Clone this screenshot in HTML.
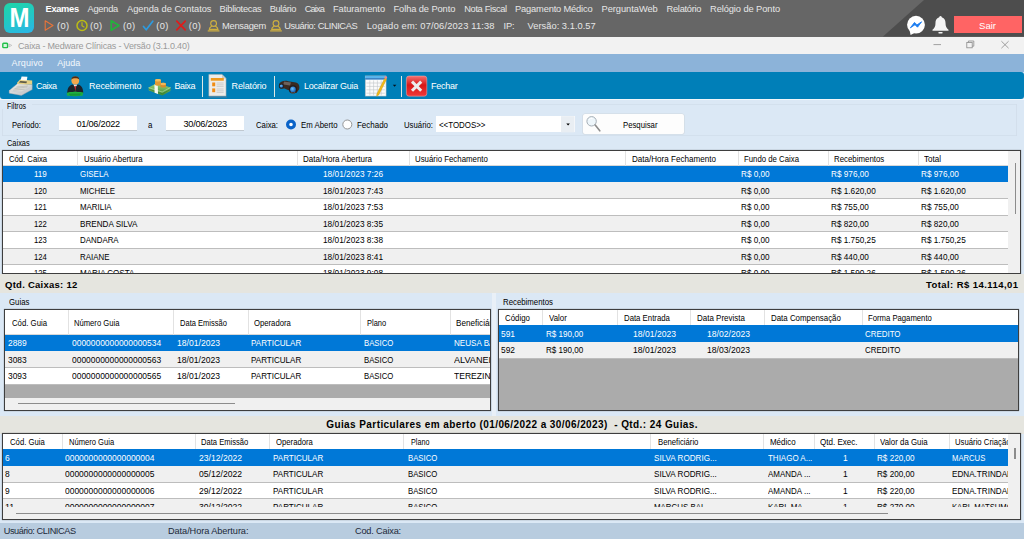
<!DOCTYPE html>
<html><head><meta charset="utf-8"><title>Caixa</title>
<style>
html,body{margin:0;padding:0;}
body{width:1024px;height:539px;overflow:hidden;position:relative;background:#dbe8f5;font-family:"Liberation Sans",sans-serif;}
.t{position:absolute;white-space:pre;font-family:"Liberation Sans",sans-serif;}
.r{position:absolute;}
svg{position:absolute;overflow:visible;}
</style></head><body>
<div class="r" style="left:0px;top:0px;width:1024px;height:36.5px;background:#666666;"></div>
<svg style="left:0;top:0" width="1024" height="37"><polygon points="924,0 1024,0 1024,36.5 883,36.5" fill="#4d4d4d"/></svg>
<div class="r" style="left:3.75px;top:3px;width:30px;height:29.5px;background:linear-gradient(160deg,#1fd6a8 0%,#22c8c4 50%,#2bb4ea 100%);border-radius:6px;"></div>
<div class="t " style="top:4.00px;font-size:24px;line-height:28.80px;color:#fff;font-weight:bold;left:9.50px;transform:scaleY(1.12);transform-origin:50% 50%;">M</div>
<div class="t " style="top:3.52px;font-size:9.3px;line-height:11.16px;color:#ffffff;font-weight:bold;letter-spacing:-0.318px;left:45.50px;">Exames</div>
<div class="t " style="top:3.52px;font-size:9.3px;line-height:11.16px;color:#e6e6e6;letter-spacing:-0.260px;left:87.50px;">Agenda</div>
<div class="t " style="top:3.52px;font-size:9.3px;line-height:11.16px;color:#e6e6e6;letter-spacing:-0.016px;left:127.00px;">Agenda de Contatos</div>
<div class="t " style="top:3.52px;font-size:9.3px;line-height:11.16px;color:#e6e6e6;letter-spacing:-0.270px;left:219.50px;">Bibliotecas</div>
<div class="t " style="top:3.52px;font-size:9.3px;line-height:11.16px;color:#e6e6e6;letter-spacing:-0.385px;left:269.75px;">Bulário</div>
<div class="t " style="top:3.52px;font-size:9.3px;line-height:11.16px;color:#e6e6e6;letter-spacing:-0.905px;left:304.75px;">Caixa</div>
<div class="t " style="top:3.52px;font-size:9.3px;line-height:11.16px;color:#e6e6e6;letter-spacing:-0.066px;left:333.00px;">Faturamento</div>
<div class="t " style="top:3.52px;font-size:9.3px;line-height:11.16px;color:#e6e6e6;letter-spacing:-0.095px;left:393.50px;">Folha de Ponto</div>
<div class="t " style="top:3.52px;font-size:9.3px;line-height:11.16px;color:#e6e6e6;letter-spacing:-0.365px;left:464.25px;">Nota Fiscal</div>
<div class="t " style="top:3.52px;font-size:9.3px;line-height:11.16px;color:#e6e6e6;letter-spacing:-0.164px;left:515.00px;">Pagamento Médico</div>
<div class="t " style="top:3.52px;font-size:9.3px;line-height:11.16px;color:#e6e6e6;letter-spacing:-0.040px;left:601.50px;">PerguntaWeb</div>
<div class="t " style="top:3.52px;font-size:9.3px;line-height:11.16px;color:#e6e6e6;letter-spacing:-0.274px;left:666.50px;">Relatório</div>
<div class="t " style="top:3.52px;font-size:9.3px;line-height:11.16px;color:#e6e6e6;letter-spacing:-0.084px;left:710.00px;">Relógio de Ponto</div>
<div class="t " style="top:20.52px;font-size:9.3px;line-height:11.16px;color:#e6e6e6;letter-spacing:0.378px;left:57.00px;">(0)</div>
<div class="t " style="top:20.52px;font-size:9.3px;line-height:11.16px;color:#e6e6e6;letter-spacing:0.378px;left:90.00px;">(0)</div>
<div class="t " style="top:20.52px;font-size:9.3px;line-height:11.16px;color:#e6e6e6;letter-spacing:0.378px;left:123.00px;">(0)</div>
<div class="t " style="top:20.52px;font-size:9.3px;line-height:11.16px;color:#e6e6e6;letter-spacing:0.378px;left:156.25px;">(0)</div>
<div class="t " style="top:20.52px;font-size:9.3px;line-height:11.16px;color:#e6e6e6;letter-spacing:0.378px;left:188.75px;">(0)</div>
<div class="t " style="top:20.52px;font-size:9.3px;line-height:11.16px;color:#e6e6e6;letter-spacing:-0.250px;left:222.00px;">Mensagem</div>
<div class="t " style="top:20.52px;font-size:9.3px;line-height:11.16px;color:#e6e6e6;letter-spacing:-0.418px;left:284.25px;">Usuário: CLINICAS</div>
<div class="t " style="top:20.52px;font-size:9.3px;line-height:11.16px;color:#e6e6e6;letter-spacing:0.170px;left:366.75px;">Logado em: 07/06/2023 11:38</div>
<div class="t " style="top:20.52px;font-size:9.3px;line-height:11.16px;color:#e6e6e6;letter-spacing:-0.124px;left:503.50px;">IP:</div>
<div class="t " style="top:20.52px;font-size:9.3px;line-height:11.16px;color:#e6e6e6;letter-spacing:0.033px;left:527.50px;">Versão: 3.1.0.57</div>
<svg style="left:0;top:0" width="1024" height="37" fill="none" stroke-linecap="round" stroke-linejoin="round">
<path d="M45.2 20.8 L53 25.5 L45.2 30.3 Z" stroke="#e8743a" stroke-width="1.1"/>
<circle cx="82" cy="25.5" r="5" stroke="#bcbc14" stroke-width="1.5"/><path d="M82 22.5 V25.8 L84 27" stroke="#bcbc14" stroke-width="1.2"/>
<path d="M111.2 20.8 L119 25.5 L111.2 30.3 Z" stroke="#22b43c" stroke-width="1.6"/>
<path d="M143.5 26.5 L146.2 29.8 L152.8 21.2" stroke="#2d9be0" stroke-width="1.7"/>
<path d="M176.8 21.2 L185.2 29.8 M185.2 21.2 L176.8 29.8" stroke="#e01b1b" stroke-width="1.7"/>
<g stroke="#cfb040" stroke-width="1.1"><circle cx="213.6" cy="23.5" r="2.9"/><path d="M211.6 26.2 C210.2 27 209.4 28 209.2 29.4 H218 C217.8 28 217 27 215.6 26.2 M208.2 30.9 H219"/></g>
<g stroke="#cfb040" stroke-width="1.1"><circle cx="276" cy="23.5" r="2.9"/><path d="M274 26.2 C272.6 27 271.8 28 271.6 29.4 H280.4 C280.2 28 279.4 27 278 26.2 M270.6 30.9 H281.4"/></g>
</svg>
<svg style="left:0;top:0" width="1024" height="37">
<circle cx="916" cy="24.7" r="8.9" fill="#fff"/><path d="M909.6 30.2 L910.6 35 L915.4 32.6 Z" fill="#fff"/>
<path d="M910.4 27.8 L914.5 22.4 L917 24.9 L921.6 21.8 L917.5 27.2 L915 24.7 Z" fill="#1a7cf0" stroke="#1a7cf0" stroke-width="0.9" stroke-linejoin="round"/>
<path d="M940.5 17.2 c-3.4 0 -5 2.6 -5 5.6 c0 3.6 -1 5.4 -3 7 v0.9 h16 v-0.9 c-2 -1.6 -3 -3.4 -3 -7 c0 -3 -1.6 -5.6 -5 -5.6z" fill="#f4f4f4"/>
<rect x="938.3" y="32" width="4.4" height="1.6" rx="0.8" fill="#f4f4f4"/><circle cx="940.5" cy="17.3" r="1.2" fill="#f4f4f4"/>
</svg>
<div class="r" style="left:954px;top:16px;width:67.8px;height:16.6px;background:#ff6464;"></div>
<div class="t " style="top:19.54px;font-size:9.6px;line-height:11.52px;color:#fff;letter-spacing:-0.018px;left:979.00px;">Sair</div>
<div class="r" style="left:0px;top:36.5px;width:1024px;height:17.5px;background:#f2f2f2;"></div>
<svg style="left:0;top:0" width="1024" height="60">
<rect x="2.1" y="42.6" width="6.2" height="5.6" rx="1.5" fill="#22c04a"/><rect x="3.5" y="43.9" width="3.4" height="3" rx="0.5" fill="#d8f6df"/>
<path d="M9.2 44 L11.8 45.4 L9.2 46.8 Z" fill="none" stroke="#b8b8b8" stroke-width="0.7"/>
<path d="M933.5 44.6 H941" stroke="#8a8a8a" stroke-width="0.8"/>
<rect x="966.8" y="42.4" width="5.4" height="5.4" fill="none" stroke="#8a8a8a" stroke-width="0.8"/><path d="M968.4 42.4 V41 H973.8 V46.2 H972.2" fill="none" stroke="#8a8a8a" stroke-width="0.8"/>
<path d="M1001.4 41.2 L1008.6 48.2 M1008.6 41.2 L1001.4 48.2" stroke="#8a8a8a" stroke-width="0.8"/>
</svg>
<div class="t " style="top:40.70px;font-size:9px;line-height:10.80px;color:#9a9a9a;letter-spacing:-0.183px;left:18.00px;">Caixa - Medware Clínicas - Versão (3.1.0.40)</div>
<div class="r" style="left:0px;top:54px;width:1024px;height:18px;background:#8cb3d9;"></div>
<div class="t " style="top:58.30px;font-size:9px;line-height:10.80px;color:#f4f8fc;letter-spacing:0.127px;left:11.60px;">Arquivo</div>
<div class="t " style="top:58.30px;font-size:9px;line-height:10.80px;color:#f4f8fc;letter-spacing:-0.003px;left:57.20px;">Ajuda</div>
<div class="r" style="left:0px;top:99px;width:1024px;height:1.6px;background:#f2f6fa;"></div>
<div class="r" style="left:0px;top:72px;width:1024px;height:27.4px;background:#007fb8;border-radius:0 3px 3px 3px;"></div>
<div class="t " style="top:80.90px;font-size:9px;line-height:10.80px;color:#ffffff;letter-spacing:-0.502px;left:36.00px;">Caixa</div>
<div class="t " style="top:80.90px;font-size:9px;line-height:10.80px;color:#ffffff;letter-spacing:-0.048px;left:89.00px;">Recebimento</div>
<div class="t " style="top:80.90px;font-size:9px;line-height:10.80px;color:#ffffff;letter-spacing:-0.403px;left:174.50px;">Baixa</div>
<div class="t " style="top:80.90px;font-size:9px;line-height:10.80px;color:#ffffff;letter-spacing:-0.113px;left:231.50px;">Relatório</div>
<div class="t " style="top:80.90px;font-size:9px;line-height:10.80px;color:#ffffff;letter-spacing:-0.252px;left:304.00px;">Localizar Guia</div>
<div class="t " style="top:80.90px;font-size:9px;line-height:10.80px;color:#ffffff;letter-spacing:-0.251px;left:431.00px;">Fechar</div>
<div class="r" style="left:202.05px;top:76px;width:0.9px;height:21px;background:#dfe9e4;"></div>
<div class="r" style="left:273.95px;top:76px;width:0.9px;height:21px;background:#dfe9e4;"></div>
<div class="r" style="left:401.15000000000003px;top:76px;width:0.9px;height:21px;background:#dfe9e4;"></div>
<svg style="left:0;top:0" width="1024" height="101">
<defs>
<linearGradient id="gx" x1="0" y1="0" x2="0" y2="1"><stop offset="0" stop-color="#f47070"/><stop offset="0.45" stop-color="#d81818"/><stop offset="1" stop-color="#f03a3a"/></linearGradient>
<linearGradient id="gk" x1="0" y1="0" x2="1" y2="1"><stop offset="0" stop-color="#f2f2ee"/><stop offset="1" stop-color="#b8bcc0"/></linearGradient>
<radialGradient id="gl" cx="0.4" cy="0.4" r="0.7"><stop offset="0" stop-color="#6cc4ff"/><stop offset="1" stop-color="#0a50a8"/></radialGradient>
<linearGradient id="gm" x1="0" y1="0" x2="0" y2="1"><stop offset="0" stop-color="#9cd47a"/><stop offset="1" stop-color="#3f8a34"/></linearGradient>
</defs>
<!-- cash register -->
<g>
<path d="M9.2 90.6 L17.6 83.6 L32.2 84.4 L32.2 89.6 L21.4 95.4 L9.2 93.2z" fill="url(#gk)" stroke="#9aa0a4" stroke-width="0.4"/>
<path d="M9.2 90.6 L21.4 92.6 L32.2 86.4" fill="none" stroke="#c4c8cc" stroke-width="0.6"/>
<path d="M12.5 89.6 L19 84.6 L29 85.4 L22 90.9z" fill="#dcdcd6"/>
<path d="M14.5 88.6 L27 87 M16.5 87 L28 86 M13.2 90.2 L24.6 89.2" stroke="#a8aaa6" stroke-width="0.5"/>
<path d="M17 82.8 L20 79.6 L32.2 80.6 L32.2 84.6 L17.4 84z" fill="#e4cf84"/>
<path d="M18.8 82.6 L20.4 81 L27 81.5 L26.4 83.2z" fill="#5c5a48"/>
<path d="M20.6 80 L21.6 76.4 L27.4 76.8 L26.8 80.6z" fill="#fafafa"/>
</g>
<!-- person -->
<g>
<path d="M67.2 93.2 C67.2 87.6 69.6 85.2 73 84.6 L77.6 84.6 C81 85.2 83.2 87.6 83.2 93.2z" fill="#1c242c"/>
<path d="M73.2 84.4 L75.3 87.6 L77.4 84.4z" fill="#f4f4f4"/>
<path d="M75.3 85.4 L74.5 86.8 L75.3 91.6 L76.1 86.8z" fill="#d42828"/>
<circle cx="75.3" cy="80.4" r="3.9" fill="#f2a64c"/>
<path d="M71.4 79.6 C71.2 75.4 79.4 75.2 79.2 79.6 C78.2 77.8 72.6 77.8 71.4 79.6z" fill="#4a2c18"/>
<path d="M66.6 93.2 C69.6 91 72.6 92.6 75.2 91.6 C78 92.8 80.6 91 83.4 92.6 L82.2 96.2 C79.6 95.2 77 96.8 74.8 96.2 C72.4 96.8 69.8 95.4 67.4 96z" fill="#1eb040"/>
<path d="M69 94.2 L81.4 94 M70 95.2 L80 95" stroke="#0c7a28" stroke-width="0.5"/>
</g>
<!-- money -->
<g>
<path d="M148.6 87.6 L157 83 L170.6 87.4 L170.4 91 L162.4 95.4 L148.8 90.6z" fill="url(#gm)"/>
<path d="M148.6 87.6 L162.2 92 L170.6 87.4" fill="none" stroke="#d0eec0" stroke-width="0.5"/>
<path d="M148.8 89.2 L162.4 93.8 L170.4 89.4" fill="none" stroke="#2e7028" stroke-width="0.5"/>
<path d="M154.4 84.4 L157.8 85.6 L158 94 L154.6 92.8z" fill="#f4f8f0"/>
<path d="M155 80.2 a3 1.3 0 0 1 6 0 v4.2 a3 1.3 0 0 1 -6 0z" fill="#e09a34"/><ellipse cx="158" cy="80.2" rx="3" ry="1.3" fill="#f2c060"/>
<path d="M160.4 84 a2.8 1.2 0 0 1 5.6 0 v2.4 a2.8 1.2 0 0 1 -5.6 0z" fill="#d48c2c"/><ellipse cx="163.2" cy="84" rx="2.8" ry="1.2" fill="#f0b858"/>
</g>
<!-- report -->
<g>
<path d="M208.4 97 h18.6" stroke="#5a7e96" stroke-width="0.9"/>
<path d="M208.9 74.4 H222 L226 78.4 V95.9 H208.9z" fill="#ececea" stroke="#b4b4b0" stroke-width="0.6"/>
<path d="M222 74.4 V78.4 H226z" fill="#c8c8c4"/>
<rect x="210.8" y="78" width="13" height="2.7" fill="#f09a1e"/>
<rect x="212.2" y="82.5" width="3" height="3.8" fill="#f08c14"/><rect x="212.2" y="88.4" width="3" height="3.8" fill="#f08c14"/>
<path d="M216.6 83 h7 M216.6 84.8 h7 M216.6 86.4 h7 M216.6 89 h7 M216.6 90.8 h7 M216.6 92.4 h7" stroke="#b8b8b8" stroke-width="0.6"/>
</g>
<!-- binoculars -->
<g>
<path d="M279 84 C281 81 285 80 288 81.2 L296 82.4 C299 83.4 300 86.4 299 89.4 L296.4 93 L288 90 L284.6 88.4 L280 88.4z" fill="#3a2a22"/>
<path d="M284 81.6 L291 82.6 L290 85.6 L283.4 84.4z" fill="#6c625c"/>
<circle cx="281.4" cy="86.1" r="2.6" fill="#2a2220"/><circle cx="281.4" cy="86.1" r="1.7" fill="url(#gl)"/>
<circle cx="293" cy="89.4" r="4.1" fill="#241c1a"/><circle cx="293" cy="89.4" r="2.9" fill="url(#gl)"/>
<path d="M290.6 92.4 a4 4 0 0 0 5 -0.4" stroke="#8a6a50" stroke-width="0.6" fill="none"/>
</g>
<!-- calendar -->
<g>
<rect x="365.2" y="75.9" width="20.9" height="20.2" fill="#fbfbfb" stroke="#9aa6b0" stroke-width="0.5"/>
<rect x="365.2" y="75.9" width="20.9" height="2.2" fill="#58b4ec"/><rect x="365.2" y="78.1" width="20.9" height="1.5" fill="#2a78c0"/>
<path d="M366.4 83 h18.4 M366.4 86.4 h18.4 M366.4 89.8 h18.4 M366.4 93.2 h18.4 M369.8 80.4 v15 M373.6 80.4 v15 M377.4 80.4 v15 M381.2 80.4 v15" stroke="#c0c4c8" stroke-width="0.6"/>
<path d="M384.6 78.2 L386.6 79.2 L378.8 95 L376.6 96.2 L376.8 94z" fill="#f0b818" stroke="#b88a10" stroke-width="0.3"/>
<circle cx="385.8" cy="77.6" r="1.3" fill="#f08a8a"/>
</g>
<path d="M392.8 84.7 h3.6 l-1.8 2z" fill="#04121c"/>
<!-- close -->
<g>
<rect x="406.4" y="76" width="20.4" height="20.2" rx="2.6" fill="url(#gx)" stroke="#f8b0b0" stroke-width="0.5"/>
<path d="M412 81.6 L421.2 90.8 M421.2 81.6 L412 90.8" stroke="#ececec" stroke-width="3" stroke-linecap="butt"/>
</g>
</svg>
<div class="r" style="left:0px;top:100px;width:1024px;height:174px;background:#dbe8f5;"></div>
<div class="r" style="left:2px;top:104px;width:1015px;height:32.4px;background:transparent;box-shadow:inset 0 0 0 0.8px #d1ddea;"></div>
<div class="r" style="left:2px;top:101px;width:30px;height:8px;background:#dbe8f5;"></div>
<div class="t " style="top:100.60px;font-size:9.0px;line-height:10.80px;color:#000;transform:scaleX(0.7796);transform-origin:0 50%;left:7.00px;">Filtros</div>
<div class="t " style="top:120.00px;font-size:9.0px;line-height:10.80px;color:#000;transform:scaleX(0.8524);transform-origin:0 50%;left:12.00px;">Período:</div>
<div class="r" style="left:59px;top:116px;width:78px;height:14px;background:#fff;box-shadow:0 1px 0 #c0c8d0;"></div>
<div class="t " style="top:118.58px;font-size:9.2px;line-height:11.04px;color:#000;letter-spacing:-0.254px;left:76.50px;">01/06/2022</div>
<div class="t " style="top:120.20px;font-size:9.0px;line-height:10.80px;color:#000;transform:scaleX(0.8778);transform-origin:0 50%;left:147.80px;">a</div>
<div class="r" style="left:166px;top:116px;width:78px;height:14px;background:#fff;box-shadow:0 1px 0 #c0c8d0;"></div>
<div class="t " style="top:118.58px;font-size:9.2px;line-height:11.04px;color:#000;letter-spacing:-0.254px;left:183.50px;">30/06/2023</div>
<div class="t " style="top:120.20px;font-size:9.0px;line-height:10.80px;color:#000;transform:scaleX(0.8624);transform-origin:0 50%;left:256.00px;">Caixa:</div>
<div class="t " style="top:120.20px;font-size:9.0px;line-height:10.80px;color:#000;transform:scaleX(0.8687);transform-origin:0 50%;left:300.50px;">Em Aberto</div>
<div class="t " style="top:120.20px;font-size:9.0px;line-height:10.80px;color:#000;transform:scaleX(0.8852);transform-origin:0 50%;left:356.50px;">Fechado</div>
<div class="t " style="top:120.20px;font-size:9.0px;line-height:10.80px;color:#000;transform:scaleX(0.8654);transform-origin:0 50%;left:403.50px;">Usuário:</div>
<div class="r" style="left:435.5px;top:116.2px;width:139px;height:16.2px;background:#fff;"></div>
<div class="t " style="top:120.20px;font-size:9.0px;line-height:10.80px;color:#000;transform:scaleX(0.8796);transform-origin:0 50%;left:438.50px;">&lt;&lt;TODOS&gt;&gt;</div>
<div class="r" style="left:583.3px;top:113.8px;width:101.2px;height:20.4px;background:#fdfdfd;border-radius:2px;box-shadow:0 0 0 0.6px #d0d8e0;"></div>
<div class="t " style="top:120.20px;font-size:9.0px;line-height:10.80px;color:#000;transform:scaleX(0.8621);transform-origin:0 50%;left:623.00px;">Pesquisar</div>
<svg style="left:0;top:0" width="1024" height="140">
<circle cx="291" cy="124.5" r="3.4" fill="#fff" stroke="#0a63c8" stroke-width="3.2"/>
<circle cx="347.3" cy="124.5" r="4.5" fill="#fff" stroke="#8a8a8a" stroke-width="0.9"/>
<rect x="561" y="116.2" width="13.5" height="16.2" fill="#e9eef3"/>
<path d="M566.3 123.4 h3.6 l-1.8 2.2z" fill="#000"/>
<circle cx="591.6" cy="121.3" r="4.7" fill="#eef6fb" stroke="#a4aeb6" stroke-width="1"/><path d="M589 119.6 a3 3 0 0 1 3.6 -1" stroke="#fff" stroke-width="1" fill="none"/><path d="M595.2 125 L599.8 130.8" stroke="#8c8c8c" stroke-width="1.6" stroke-linecap="round"/>
</svg>
<div class="t " style="top:138.20px;font-size:9.0px;line-height:10.80px;color:#000;transform:scaleX(0.8252);transform-origin:0 50%;left:6.50px;">Caixas</div>
<div class="r" style="left:3px;top:150.9px;width:1017.4px;height:121.9px;background:#ffffff;box-shadow:0 0 0 1.1px #3e3e3e;overflow:hidden;"></div>
<div class="r" style="left:3px;top:150.9px;width:1017.4px;height:121.9px;overflow:hidden;">
<div class="r" style="left:0.00px;top:0.00px;width:1005.00px;height:15.10px;background:#ffffff;"></div>
<div class="r" style="left:0.00px;top:14.50px;width:1005.00px;height:0.80px;background:#d8d8d8;"></div>
<div class="r" style="left:74.10px;top:0.00px;width:0.80px;height:15.10px;background:#e2e2e2;"></div>
<div class="r" style="left:294.10px;top:0.00px;width:0.80px;height:15.10px;background:#e2e2e2;"></div>
<div class="r" style="left:405.90px;top:0.00px;width:0.80px;height:15.10px;background:#e2e2e2;"></div>
<div class="r" style="left:622.00px;top:0.00px;width:0.80px;height:15.10px;background:#e2e2e2;"></div>
<div class="r" style="left:734.60px;top:0.00px;width:0.80px;height:15.10px;background:#e2e2e2;"></div>
<div class="r" style="left:824.80px;top:0.00px;width:0.80px;height:15.10px;background:#e2e2e2;"></div>
<div class="r" style="left:915.00px;top:0.00px;width:0.80px;height:15.10px;background:#e2e2e2;"></div>
<div class="r" style="left:0.00px;top:15.10px;width:1005.00px;height:16.80px;background:#0078d7;"></div>
<div class="r" style="left:0.00px;top:31.60px;width:1005.00px;height:16.80px;background:#f0f0f0;"></div>
<div class="r" style="left:0.00px;top:48.10px;width:1005.00px;height:16.80px;background:#ffffff;"></div>
<div class="r" style="left:0.00px;top:64.60px;width:1005.00px;height:16.80px;background:#f0f0f0;"></div>
<div class="r" style="left:0.00px;top:81.10px;width:1005.00px;height:16.80px;background:#ffffff;"></div>
<div class="r" style="left:0.00px;top:97.60px;width:1005.00px;height:16.80px;background:#f0f0f0;"></div>
<div class="r" style="left:0.00px;top:114.10px;width:1005.00px;height:16.80px;background:#ffffff;"></div>
<div class="r" style="left:0.00px;top:47.50px;width:1005.00px;height:1.00px;background:#bdbdbd;"></div>
<div class="r" style="left:0.00px;top:64.00px;width:1005.00px;height:1.00px;background:#bdbdbd;"></div>
<div class="r" style="left:0.00px;top:80.50px;width:1005.00px;height:1.00px;background:#bdbdbd;"></div>
<div class="r" style="left:0.00px;top:97.00px;width:1005.00px;height:1.00px;background:#bdbdbd;"></div>
<div class="r" style="left:0.00px;top:113.50px;width:1005.00px;height:1.00px;background:#bdbdbd;"></div>
<div class="r" style="left:0.00px;top:130.00px;width:1005.00px;height:1.00px;background:#bdbdbd;"></div>
</div>
<div class="r" style="left:3px;top:150.9px;width:1005px;height:121.9px;overflow:hidden;">
<div class="t " style="top:2.75px;font-size:9.0px;line-height:10.80px;color:#000;transform:scaleX(0.8536);transform-origin:0 50%;left:6.40px;">Cód. Caixa</div>
<div class="t " style="top:2.75px;font-size:9.0px;line-height:10.80px;color:#000;transform:scaleX(0.8663);transform-origin:0 50%;left:80.50px;">Usuário Abertura</div>
<div class="t " style="top:2.75px;font-size:9.0px;line-height:10.80px;color:#000;transform:scaleX(0.8899);transform-origin:0 50%;left:299.50px;">Data/Hora Abertura</div>
<div class="t " style="top:2.75px;font-size:9.0px;line-height:10.80px;color:#000;transform:scaleX(0.8715);transform-origin:0 50%;left:411.80px;">Usuário Fechamento</div>
<div class="t " style="top:2.75px;font-size:9.0px;line-height:10.80px;color:#000;transform:scaleX(0.8969);transform-origin:0 50%;left:628.60px;">Data/Hora Fechamento</div>
<div class="t " style="top:2.75px;font-size:9.0px;line-height:10.80px;color:#000;transform:scaleX(0.8657);transform-origin:0 50%;left:740.70px;">Fundo de Caixa</div>
<div class="t " style="top:2.75px;font-size:9.0px;line-height:10.80px;color:#000;transform:scaleX(0.8744);transform-origin:0 50%;left:830.90px;">Recebimentos</div>
<div class="t " style="top:2.75px;font-size:9.0px;line-height:10.80px;color:#000;transform:scaleX(0.8943);transform-origin:0 50%;left:921.00px;">Total</div>
<div class="t " style="top:18.45px;font-size:9.0px;line-height:10.80px;color:#ffffff;transform:scaleX(0.8922);transform-origin:0 50%;left:30.50px;">119</div>
<div class="t " style="top:18.45px;font-size:9.0px;line-height:10.80px;color:#ffffff;transform:scaleX(0.8778);transform-origin:0 50%;left:77.00px;">GISELA</div>
<div class="t " style="top:18.45px;font-size:9.0px;line-height:10.80px;color:#ffffff;transform:scaleX(0.9223);transform-origin:0 50%;left:319.50px;">18/01/2023 7:26</div>
<div class="t " style="top:18.45px;font-size:9.0px;line-height:10.80px;color:#ffffff;transform:scaleX(0.9042);transform-origin:0 50%;left:738.00px;">R$ 0,00</div>
<div class="t " style="top:18.45px;font-size:9.0px;line-height:10.80px;color:#ffffff;transform:scaleX(0.9113);transform-origin:0 50%;left:827.50px;">R$ 976,00</div>
<div class="t " style="top:18.45px;font-size:9.0px;line-height:10.80px;color:#ffffff;transform:scaleX(0.9113);transform-origin:0 50%;left:917.50px;">R$ 976,00</div>
<div class="t " style="top:34.95px;font-size:9.0px;line-height:10.80px;color:#000;transform:scaleX(0.8525);transform-origin:0 50%;left:30.50px;">120</div>
<div class="t " style="top:34.95px;font-size:9.0px;line-height:10.80px;color:#000;transform:scaleX(0.8778);transform-origin:0 50%;left:77.00px;">MICHELE</div>
<div class="t " style="top:34.95px;font-size:9.0px;line-height:10.80px;color:#000;transform:scaleX(0.9223);transform-origin:0 50%;left:319.50px;">18/01/2023 7:43</div>
<div class="t " style="top:34.95px;font-size:9.0px;line-height:10.80px;color:#000;transform:scaleX(0.9042);transform-origin:0 50%;left:738.00px;">R$ 0,00</div>
<div class="t " style="top:34.95px;font-size:9.0px;line-height:10.80px;color:#000;transform:scaleX(0.9118);transform-origin:0 50%;left:827.50px;">R$ 1.620,00</div>
<div class="t " style="top:34.95px;font-size:9.0px;line-height:10.80px;color:#000;transform:scaleX(0.9118);transform-origin:0 50%;left:917.50px;">R$ 1.620,00</div>
<div class="t " style="top:51.45px;font-size:9.0px;line-height:10.80px;color:#000;transform:scaleX(0.8525);transform-origin:0 50%;left:30.50px;">121</div>
<div class="t " style="top:51.45px;font-size:9.0px;line-height:10.80px;color:#000;transform:scaleX(0.8778);transform-origin:0 50%;left:77.00px;">MARILIA</div>
<div class="t " style="top:51.45px;font-size:9.0px;line-height:10.80px;color:#000;transform:scaleX(0.9223);transform-origin:0 50%;left:319.50px;">18/01/2023 7:53</div>
<div class="t " style="top:51.45px;font-size:9.0px;line-height:10.80px;color:#000;transform:scaleX(0.9042);transform-origin:0 50%;left:738.00px;">R$ 0,00</div>
<div class="t " style="top:51.45px;font-size:9.0px;line-height:10.80px;color:#000;transform:scaleX(0.9113);transform-origin:0 50%;left:827.50px;">R$ 755,00</div>
<div class="t " style="top:51.45px;font-size:9.0px;line-height:10.80px;color:#000;transform:scaleX(0.9113);transform-origin:0 50%;left:917.50px;">R$ 755,00</div>
<div class="t " style="top:67.95px;font-size:9.0px;line-height:10.80px;color:#000;transform:scaleX(0.8525);transform-origin:0 50%;left:30.50px;">122</div>
<div class="t " style="top:67.95px;font-size:9.0px;line-height:10.80px;color:#000;transform:scaleX(0.9030);transform-origin:0 50%;left:77.00px;">BRENDA SILVA</div>
<div class="t " style="top:67.95px;font-size:9.0px;line-height:10.80px;color:#000;transform:scaleX(0.9223);transform-origin:0 50%;left:319.50px;">18/01/2023 8:35</div>
<div class="t " style="top:67.95px;font-size:9.0px;line-height:10.80px;color:#000;transform:scaleX(0.9042);transform-origin:0 50%;left:738.00px;">R$ 0,00</div>
<div class="t " style="top:67.95px;font-size:9.0px;line-height:10.80px;color:#000;transform:scaleX(0.9113);transform-origin:0 50%;left:827.50px;">R$ 820,00</div>
<div class="t " style="top:67.95px;font-size:9.0px;line-height:10.80px;color:#000;transform:scaleX(0.9113);transform-origin:0 50%;left:917.50px;">R$ 820,00</div>
<div class="t " style="top:84.45px;font-size:9.0px;line-height:10.80px;color:#000;transform:scaleX(0.8525);transform-origin:0 50%;left:30.50px;">123</div>
<div class="t " style="top:84.45px;font-size:9.0px;line-height:10.80px;color:#000;transform:scaleX(0.8778);transform-origin:0 50%;left:77.00px;">DANDARA</div>
<div class="t " style="top:84.45px;font-size:9.0px;line-height:10.80px;color:#000;transform:scaleX(0.9223);transform-origin:0 50%;left:319.50px;">18/01/2023 8:38</div>
<div class="t " style="top:84.45px;font-size:9.0px;line-height:10.80px;color:#000;transform:scaleX(0.9042);transform-origin:0 50%;left:738.00px;">R$ 0,00</div>
<div class="t " style="top:84.45px;font-size:9.0px;line-height:10.80px;color:#000;transform:scaleX(0.9118);transform-origin:0 50%;left:827.50px;">R$ 1.750,25</div>
<div class="t " style="top:84.45px;font-size:9.0px;line-height:10.80px;color:#000;transform:scaleX(0.9118);transform-origin:0 50%;left:917.50px;">R$ 1.750,25</div>
<div class="t " style="top:100.95px;font-size:9.0px;line-height:10.80px;color:#000;transform:scaleX(0.8525);transform-origin:0 50%;left:30.50px;">124</div>
<div class="t " style="top:100.95px;font-size:9.0px;line-height:10.80px;color:#000;transform:scaleX(0.8778);transform-origin:0 50%;left:77.00px;">RAIANE</div>
<div class="t " style="top:100.95px;font-size:9.0px;line-height:10.80px;color:#000;transform:scaleX(0.9223);transform-origin:0 50%;left:319.50px;">18/01/2023 8:41</div>
<div class="t " style="top:100.95px;font-size:9.0px;line-height:10.80px;color:#000;transform:scaleX(0.9042);transform-origin:0 50%;left:738.00px;">R$ 0,00</div>
<div class="t " style="top:100.95px;font-size:9.0px;line-height:10.80px;color:#000;transform:scaleX(0.9113);transform-origin:0 50%;left:827.50px;">R$ 440,00</div>
<div class="t " style="top:100.95px;font-size:9.0px;line-height:10.80px;color:#000;transform:scaleX(0.9113);transform-origin:0 50%;left:917.50px;">R$ 440,00</div>
<div class="t " style="top:117.45px;font-size:9.0px;line-height:10.80px;color:#000;transform:scaleX(0.8525);transform-origin:0 50%;left:30.50px;">125</div>
<div class="t " style="top:117.45px;font-size:9.0px;line-height:10.80px;color:#000;transform:scaleX(0.8946);transform-origin:0 50%;left:77.00px;">MARIA COSTA</div>
<div class="t " style="top:117.45px;font-size:9.0px;line-height:10.80px;color:#000;transform:scaleX(0.9223);transform-origin:0 50%;left:319.50px;">18/01/2023 9:08</div>
<div class="t " style="top:117.45px;font-size:9.0px;line-height:10.80px;color:#000;transform:scaleX(0.9042);transform-origin:0 50%;left:738.00px;">R$ 0,00</div>
<div class="t " style="top:117.45px;font-size:9.0px;line-height:10.80px;color:#000;transform:scaleX(0.9118);transform-origin:0 50%;left:827.50px;">R$ 1.590,26</div>
<div class="t " style="top:117.45px;font-size:9.0px;line-height:10.80px;color:#000;transform:scaleX(0.9118);transform-origin:0 50%;left:917.50px;">R$ 1.590,26</div>
</div>
<div class="r" style="left:1008px;top:150.9px;width:12.4px;height:121.9px;background:#f0f0f0;"></div>
<div class="r" style="left:1014.6px;top:163px;width:1.2px;height:51px;background:#8c8c8c;"></div>
<div class="r" style="left:0px;top:274px;width:1024px;height:19.4px;background:#e5e5df;"></div>
<div class="t " style="top:279.10px;font-size:9.5px;line-height:11.40px;color:#000;font-weight:bold;letter-spacing:0.258px;left:5.00px;">Qtd. Caixas: 12</div>
<div class="t " style="top:279.10px;font-size:9.5px;line-height:11.40px;color:#000;font-weight:bold;letter-spacing:0.426px;left:926.00px;">Total: R$ 14.114,01</div>
<div class="r" style="left:0px;top:293.2px;width:1024px;height:123px;background:#dbe8f5;"></div>
<div class="r" style="left:491.6px;top:293.3px;width:4.8px;height:122.4px;background:#e9f0f7;"></div>
<div class="t " style="top:297.20px;font-size:9.0px;line-height:10.80px;color:#000;transform:scaleX(0.8677);transform-origin:0 50%;left:8.60px;">Guias</div>
<div class="t " style="top:297.20px;font-size:9.0px;line-height:10.80px;color:#000;transform:scaleX(0.8692);transform-origin:0 50%;left:502.80px;">Recebimentos</div>
<div class="r" style="left:5.1px;top:310.1px;width:484.59999999999997px;height:100.09999999999997px;background:#ababab;box-shadow:0 0 0 1.1px #3e3e3e;overflow:hidden;"></div>
<div class="r" style="left:5.1px;top:310.1px;width:484.59999999999997px;height:100.09999999999997px;overflow:hidden;">
<div class="r" style="left:0.00px;top:0.00px;width:484.60px;height:24.90px;background:#ffffff;"></div>
<div class="r" style="left:0.00px;top:24.30px;width:484.60px;height:0.80px;background:#d8d8d8;"></div>
<div class="r" style="left:62.50px;top:0.00px;width:0.80px;height:24.90px;background:#e2e2e2;"></div>
<div class="r" style="left:167.90px;top:0.00px;width:0.80px;height:24.90px;background:#e2e2e2;"></div>
<div class="r" style="left:242.60px;top:0.00px;width:0.80px;height:24.90px;background:#e2e2e2;"></div>
<div class="r" style="left:355.10px;top:0.00px;width:0.80px;height:24.90px;background:#e2e2e2;"></div>
<div class="r" style="left:445.20px;top:0.00px;width:0.80px;height:24.90px;background:#e2e2e2;"></div>
<div class="r" style="left:0.00px;top:24.90px;width:484.60px;height:16.80px;background:#0078d7;"></div>
<div class="r" style="left:0.00px;top:41.40px;width:484.60px;height:16.80px;background:#f0f0f0;"></div>
<div class="r" style="left:0.00px;top:57.90px;width:484.60px;height:16.80px;background:#ffffff;"></div>
<div class="r" style="left:0.00px;top:57.30px;width:484.60px;height:1.00px;background:#bdbdbd;"></div>
<div class="r" style="left:0.00px;top:73.80px;width:484.60px;height:1.00px;background:#bdbdbd;"></div>
</div>
<div class="r" style="left:5.1px;top:310.1px;width:484.59999999999997px;height:100.09999999999997px;overflow:hidden;">
<div class="t " style="top:8.20px;font-size:9.0px;line-height:10.80px;color:#000;transform:scaleX(0.8638);transform-origin:0 50%;left:6.60px;">Cód. Guia</div>
<div class="t " style="top:8.20px;font-size:9.0px;line-height:10.80px;color:#000;transform:scaleX(0.8483);transform-origin:0 50%;left:69.30px;">Número Guia</div>
<div class="t " style="top:8.20px;font-size:9.0px;line-height:10.80px;color:#000;transform:scaleX(0.8372);transform-origin:0 50%;left:174.60px;">Data Emissão</div>
<div class="t " style="top:8.20px;font-size:9.0px;line-height:10.80px;color:#000;transform:scaleX(0.8554);transform-origin:0 50%;left:248.90px;">Operadora</div>
<div class="t " style="top:8.20px;font-size:9.0px;line-height:10.80px;color:#000;transform:scaleX(0.8298);transform-origin:0 50%;left:361.80px;">Plano</div>
<div class="t " style="top:8.20px;font-size:9.0px;line-height:10.80px;color:#000;transform:scaleX(0.9038);transform-origin:0 50%;left:451.40px;">Beneficiário</div>
<div class="t " style="top:28.25px;font-size:9.0px;line-height:10.80px;color:#ffffff;transform:scaleX(0.9333);transform-origin:0 50%;left:2.50px;">2889</div>
<div class="t " style="top:28.25px;font-size:9.0px;line-height:10.80px;color:#ffffff;transform:scaleX(0.9370);transform-origin:0 50%;left:66.70px;">0000000000000000534</div>
<div class="t " style="top:28.25px;font-size:9.0px;line-height:10.80px;color:#ffffff;transform:scaleX(0.9547);transform-origin:0 50%;left:171.80px;">18/01/2023</div>
<div class="t " style="top:28.25px;font-size:9.0px;line-height:10.80px;color:#ffffff;transform:scaleX(0.8953);transform-origin:0 50%;left:246.30px;">PARTICULAR</div>
<div class="t " style="top:28.25px;font-size:9.0px;line-height:10.80px;color:#ffffff;transform:scaleX(0.8615);transform-origin:0 50%;left:358.50px;">BASICO</div>
<div class="t " style="top:28.25px;font-size:9.0px;line-height:10.80px;color:#ffffff;transform:scaleX(0.8977);transform-origin:0 50%;left:448.90px;">NEUSA BARBOSA</div>
<div class="t " style="top:44.75px;font-size:9.0px;line-height:10.80px;color:#000;transform:scaleX(0.9333);transform-origin:0 50%;left:2.50px;">3083</div>
<div class="t " style="top:44.75px;font-size:9.0px;line-height:10.80px;color:#000;transform:scaleX(0.9370);transform-origin:0 50%;left:66.70px;">0000000000000000563</div>
<div class="t " style="top:44.75px;font-size:9.0px;line-height:10.80px;color:#000;transform:scaleX(0.9547);transform-origin:0 50%;left:171.80px;">18/01/2023</div>
<div class="t " style="top:44.75px;font-size:9.0px;line-height:10.80px;color:#000;transform:scaleX(0.8953);transform-origin:0 50%;left:246.30px;">PARTICULAR</div>
<div class="t " style="top:44.75px;font-size:9.0px;line-height:10.80px;color:#000;transform:scaleX(0.8615);transform-origin:0 50%;left:358.50px;">BASICO</div>
<div class="t " style="top:44.75px;font-size:9.0px;line-height:10.80px;color:#000;transform:scaleX(1.0107);transform-origin:0 50%;left:448.90px;">ALVANEIA SOUZA</div>
<div class="t " style="top:61.25px;font-size:9.0px;line-height:10.80px;color:#000;transform:scaleX(0.9333);transform-origin:0 50%;left:2.50px;">3093</div>
<div class="t " style="top:61.25px;font-size:9.0px;line-height:10.80px;color:#000;transform:scaleX(0.9370);transform-origin:0 50%;left:66.70px;">0000000000000000565</div>
<div class="t " style="top:61.25px;font-size:9.0px;line-height:10.80px;color:#000;transform:scaleX(0.9547);transform-origin:0 50%;left:171.80px;">18/01/2023</div>
<div class="t " style="top:61.25px;font-size:9.0px;line-height:10.80px;color:#000;transform:scaleX(0.8953);transform-origin:0 50%;left:246.30px;">PARTICULAR</div>
<div class="t " style="top:61.25px;font-size:9.0px;line-height:10.80px;color:#000;transform:scaleX(0.8615);transform-origin:0 50%;left:358.50px;">BASICO</div>
<div class="t " style="top:61.25px;font-size:9.0px;line-height:10.80px;color:#000;transform:scaleX(0.9498);transform-origin:0 50%;left:448.90px;">TEREZINHA LIMA</div>
</div>
<div class="r" style="left:5.1px;top:397.5px;width:484.6px;height:12.7px;background:#f0f0f0;"></div>
<div class="r" style="left:18px;top:403.3px;width:216.5px;height:1.1px;background:#8c8c8c;"></div>
<div class="r" style="left:499px;top:309.8px;width:519.4px;height:100.39999999999998px;background:#ababab;box-shadow:0 0 0 1.1px #3e3e3e;overflow:hidden;"></div>
<div class="r" style="left:499px;top:309.8px;width:519.4px;height:100.39999999999998px;overflow:hidden;">
<div class="r" style="left:0.00px;top:0.00px;width:519.40px;height:15.50px;background:#ffffff;"></div>
<div class="r" style="left:0.00px;top:14.90px;width:519.40px;height:0.80px;background:#d8d8d8;"></div>
<div class="r" style="left:42.80px;top:0.00px;width:0.80px;height:15.50px;background:#e2e2e2;"></div>
<div class="r" style="left:118.40px;top:0.00px;width:0.80px;height:15.50px;background:#e2e2e2;"></div>
<div class="r" style="left:191.30px;top:0.00px;width:0.80px;height:15.50px;background:#e2e2e2;"></div>
<div class="r" style="left:265.00px;top:0.00px;width:0.80px;height:15.50px;background:#e2e2e2;"></div>
<div class="r" style="left:362.60px;top:0.00px;width:0.80px;height:15.50px;background:#e2e2e2;"></div>
<div class="r" style="left:0.00px;top:15.50px;width:519.40px;height:16.80px;background:#0078d7;"></div>
<div class="r" style="left:0.00px;top:32.00px;width:519.40px;height:16.80px;background:#f0f0f0;"></div>
<div class="r" style="left:0.00px;top:47.90px;width:519.40px;height:1.00px;background:#bdbdbd;"></div>
</div>
<div class="r" style="left:499px;top:309.8px;width:519.4px;height:100.39999999999998px;overflow:hidden;">
<div class="t " style="top:2.95px;font-size:9.0px;line-height:10.80px;color:#000;transform:scaleX(0.8731);transform-origin:0 50%;left:5.60px;">Código</div>
<div class="t " style="top:2.95px;font-size:9.0px;line-height:10.80px;color:#000;transform:scaleX(0.8751);transform-origin:0 50%;left:49.50px;">Valor</div>
<div class="t " style="top:2.95px;font-size:9.0px;line-height:10.80px;color:#000;transform:scaleX(0.8656);transform-origin:0 50%;left:124.90px;">Data Entrada</div>
<div class="t " style="top:2.95px;font-size:9.0px;line-height:10.80px;color:#000;transform:scaleX(0.8886);transform-origin:0 50%;left:198.00px;">Data Prevista</div>
<div class="t " style="top:2.95px;font-size:9.0px;line-height:10.80px;color:#000;transform:scaleX(0.8788);transform-origin:0 50%;left:271.50px;">Data Compensação</div>
<div class="t " style="top:2.95px;font-size:9.0px;line-height:10.80px;color:#000;transform:scaleX(0.8560);transform-origin:0 50%;left:369.10px;">Forma Pagamento</div>
<div class="t " style="top:18.85px;font-size:9.0px;line-height:10.80px;color:#ffffff;transform:scaleX(0.9333);transform-origin:0 50%;left:1.80px;">591</div>
<div class="t " style="top:18.85px;font-size:9.0px;line-height:10.80px;color:#ffffff;transform:scaleX(0.8982);transform-origin:0 50%;left:46.50px;">R$ 190,00</div>
<div class="t " style="top:18.85px;font-size:9.0px;line-height:10.80px;color:#ffffff;transform:scaleX(0.9547);transform-origin:0 50%;left:134.00px;">18/01/2023</div>
<div class="t " style="top:18.85px;font-size:9.0px;line-height:10.80px;color:#ffffff;transform:scaleX(0.9547);transform-origin:0 50%;left:207.70px;">18/02/2023</div>
<div class="t " style="top:18.85px;font-size:9.0px;line-height:10.80px;color:#ffffff;transform:scaleX(0.8801);transform-origin:0 50%;left:365.80px;">CREDITO</div>
<div class="t " style="top:35.35px;font-size:9.0px;line-height:10.80px;color:#000;transform:scaleX(0.9333);transform-origin:0 50%;left:1.80px;">592</div>
<div class="t " style="top:35.35px;font-size:9.0px;line-height:10.80px;color:#000;transform:scaleX(0.8982);transform-origin:0 50%;left:46.50px;">R$ 190,00</div>
<div class="t " style="top:35.35px;font-size:9.0px;line-height:10.80px;color:#000;transform:scaleX(0.9547);transform-origin:0 50%;left:134.00px;">18/01/2023</div>
<div class="t " style="top:35.35px;font-size:9.0px;line-height:10.80px;color:#000;transform:scaleX(0.9547);transform-origin:0 50%;left:207.70px;">18/03/2023</div>
<div class="t " style="top:35.35px;font-size:9.0px;line-height:10.80px;color:#000;transform:scaleX(0.8801);transform-origin:0 50%;left:365.80px;">CREDITO</div>
</div>
<div class="r" style="left:0px;top:415.7px;width:1024px;height:18px;background:#e5e5df;"></div>
<div class="t " style="top:418.50px;font-size:10.0px;line-height:12.00px;color:#000;font-weight:bold;letter-spacing:0.418px;left:326.20px;">Guias Particulares em aberto (01/06/2022 a 30/06/2023)  - Qtd.: 24 Guias.</div>
<div class="r" style="left:3px;top:433.9px;width:1017.4px;height:85.0px;background:#ffffff;box-shadow:0 0 0 1.1px #3e3e3e;overflow:hidden;"></div>
<div class="r" style="left:3px;top:433.9px;width:1017.4px;height:85.0px;overflow:hidden;">
<div class="r" style="left:0.00px;top:0.00px;width:1005.00px;height:15.60px;background:#ffffff;"></div>
<div class="r" style="left:0.00px;top:15.00px;width:1005.00px;height:0.80px;background:#d8d8d8;"></div>
<div class="r" style="left:58.90px;top:0.00px;width:0.80px;height:15.60px;background:#e2e2e2;"></div>
<div class="r" style="left:192.10px;top:0.00px;width:0.80px;height:15.60px;background:#e2e2e2;"></div>
<div class="r" style="left:266.00px;top:0.00px;width:0.80px;height:15.60px;background:#e2e2e2;"></div>
<div class="r" style="left:400.20px;top:0.00px;width:0.80px;height:15.60px;background:#e2e2e2;"></div>
<div class="r" style="left:646.90px;top:0.00px;width:0.80px;height:15.60px;background:#e2e2e2;"></div>
<div class="r" style="left:760.40px;top:0.00px;width:0.80px;height:15.60px;background:#e2e2e2;"></div>
<div class="r" style="left:811.00px;top:0.00px;width:0.80px;height:15.60px;background:#e2e2e2;"></div>
<div class="r" style="left:871.00px;top:0.00px;width:0.80px;height:15.60px;background:#e2e2e2;"></div>
<div class="r" style="left:946.00px;top:0.00px;width:0.80px;height:15.60px;background:#e2e2e2;"></div>
<div class="r" style="left:0.00px;top:15.60px;width:1005.00px;height:16.80px;background:#0078d7;"></div>
<div class="r" style="left:0.00px;top:32.10px;width:1005.00px;height:16.80px;background:#f0f0f0;"></div>
<div class="r" style="left:0.00px;top:48.60px;width:1005.00px;height:16.80px;background:#ffffff;"></div>
<div class="r" style="left:0.00px;top:65.10px;width:1005.00px;height:16.80px;background:#f0f0f0;"></div>
<div class="r" style="left:0.00px;top:48.00px;width:1005.00px;height:1.00px;background:#bdbdbd;"></div>
<div class="r" style="left:0.00px;top:64.50px;width:1005.00px;height:1.00px;background:#bdbdbd;"></div>
<div class="r" style="left:0.00px;top:81.00px;width:1005.00px;height:1.00px;background:#bdbdbd;"></div>
</div>
<div class="r" style="left:3px;top:433.9px;width:1005px;height:73.10000000000002px;overflow:hidden;">
<div class="t " style="top:3.00px;font-size:9.0px;line-height:10.80px;color:#000;transform:scaleX(0.8588);transform-origin:0 50%;left:6.50px;">Cód. Guia</div>
<div class="t " style="top:3.00px;font-size:9.0px;line-height:10.80px;color:#000;transform:scaleX(0.8427);transform-origin:0 50%;left:65.80px;">Número Guia</div>
<div class="t " style="top:3.00px;font-size:9.0px;line-height:10.80px;color:#000;transform:scaleX(0.8444);transform-origin:0 50%;left:198.10px;">Data Emissão</div>
<div class="t " style="top:3.00px;font-size:9.0px;line-height:10.80px;color:#000;transform:scaleX(0.8577);transform-origin:0 50%;left:272.90px;">Operadora</div>
<div class="t " style="top:3.00px;font-size:9.0px;line-height:10.80px;color:#000;transform:scaleX(0.7994);transform-origin:0 50%;left:408.30px;">Plano</div>
<div class="t " style="top:3.00px;font-size:9.0px;line-height:10.80px;color:#000;transform:scaleX(0.8591);transform-origin:0 50%;left:654.60px;">Beneficiário</div>
<div class="t " style="top:3.00px;font-size:9.0px;line-height:10.80px;color:#000;transform:scaleX(0.8824);transform-origin:0 50%;left:767.00px;">Médico</div>
<div class="t " style="top:3.00px;font-size:9.0px;line-height:10.80px;color:#000;transform:scaleX(0.8925);transform-origin:0 50%;left:817.00px;">Qtd. Exec.</div>
<div class="t " style="top:3.00px;font-size:9.0px;line-height:10.80px;color:#000;transform:scaleX(0.8756);transform-origin:0 50%;left:877.00px;">Valor da Guia</div>
<div class="t " style="top:3.00px;font-size:9.0px;line-height:10.80px;color:#000;transform:scaleX(0.8602);transform-origin:0 50%;left:952.00px;">Usuário Criação</div>
<div class="t " style="top:18.95px;font-size:9.0px;line-height:10.80px;color:#ffffff;transform:scaleX(0.9333);transform-origin:0 50%;left:2.20px;">6</div>
<div class="t " style="top:18.95px;font-size:9.0px;line-height:10.80px;color:#ffffff;transform:scaleX(0.9401);transform-origin:0 50%;left:62.30px;">0000000000000000004</div>
<div class="t " style="top:18.95px;font-size:9.0px;line-height:10.80px;color:#ffffff;transform:scaleX(0.9547);transform-origin:0 50%;left:195.50px;">23/12/2022</div>
<div class="t " style="top:18.95px;font-size:9.0px;line-height:10.80px;color:#ffffff;transform:scaleX(0.8953);transform-origin:0 50%;left:269.90px;">PARTICULAR</div>
<div class="t " style="top:18.95px;font-size:9.0px;line-height:10.80px;color:#ffffff;transform:scaleX(0.8615);transform-origin:0 50%;left:405.20px;">BASICO</div>
<div class="t " style="top:18.95px;font-size:9.0px;line-height:10.80px;color:#ffffff;transform:scaleX(0.9009);transform-origin:0 50%;left:650.90px;">SILVA RODRIG...</div>
<div class="t " style="top:18.95px;font-size:9.0px;line-height:10.80px;color:#ffffff;transform:scaleX(0.8865);transform-origin:0 50%;left:764.50px;">THIAGO A...</div>
<div class="t " style="top:18.95px;font-size:9.0px;line-height:10.80px;color:#ffffff;transform:scaleX(0.9333);transform-origin:0 50%;left:839.50px;">1</div>
<div class="t " style="top:18.95px;font-size:9.0px;line-height:10.80px;color:#ffffff;transform:scaleX(0.9030);transform-origin:0 50%;left:874.40px;">R$ 220,00</div>
<div class="t " style="top:18.95px;font-size:9.0px;line-height:10.80px;color:#ffffff;transform:scaleX(0.8538);transform-origin:0 50%;left:949.40px;">MARCUS</div>
<div class="t " style="top:35.45px;font-size:9.0px;line-height:10.80px;color:#000;transform:scaleX(0.9333);transform-origin:0 50%;left:2.20px;">8</div>
<div class="t " style="top:35.45px;font-size:9.0px;line-height:10.80px;color:#000;transform:scaleX(0.9401);transform-origin:0 50%;left:62.30px;">0000000000000000005</div>
<div class="t " style="top:35.45px;font-size:9.0px;line-height:10.80px;color:#000;transform:scaleX(0.9547);transform-origin:0 50%;left:195.50px;">05/12/2022</div>
<div class="t " style="top:35.45px;font-size:9.0px;line-height:10.80px;color:#000;transform:scaleX(0.8953);transform-origin:0 50%;left:269.90px;">PARTICULAR</div>
<div class="t " style="top:35.45px;font-size:9.0px;line-height:10.80px;color:#000;transform:scaleX(0.8615);transform-origin:0 50%;left:405.20px;">BASICO</div>
<div class="t " style="top:35.45px;font-size:9.0px;line-height:10.80px;color:#000;transform:scaleX(0.9009);transform-origin:0 50%;left:650.90px;">SILVA RODRIG...</div>
<div class="t " style="top:35.45px;font-size:9.0px;line-height:10.80px;color:#000;transform:scaleX(0.8869);transform-origin:0 50%;left:764.50px;">AMANDA ...</div>
<div class="t " style="top:35.45px;font-size:9.0px;line-height:10.80px;color:#000;transform:scaleX(0.9333);transform-origin:0 50%;left:839.50px;">1</div>
<div class="t " style="top:35.45px;font-size:9.0px;line-height:10.80px;color:#000;transform:scaleX(0.9030);transform-origin:0 50%;left:874.40px;">R$ 200,00</div>
<div class="t " style="top:35.45px;font-size:9.0px;line-height:10.80px;color:#000;transform:scaleX(0.9033);transform-origin:0 50%;left:949.40px;">EDNA.TRINDADE</div>
<div class="t " style="top:51.95px;font-size:9.0px;line-height:10.80px;color:#000;transform:scaleX(0.9333);transform-origin:0 50%;left:2.20px;">9</div>
<div class="t " style="top:51.95px;font-size:9.0px;line-height:10.80px;color:#000;transform:scaleX(0.9401);transform-origin:0 50%;left:62.30px;">0000000000000000006</div>
<div class="t " style="top:51.95px;font-size:9.0px;line-height:10.80px;color:#000;transform:scaleX(0.9547);transform-origin:0 50%;left:195.50px;">29/12/2022</div>
<div class="t " style="top:51.95px;font-size:9.0px;line-height:10.80px;color:#000;transform:scaleX(0.8953);transform-origin:0 50%;left:269.90px;">PARTICULAR</div>
<div class="t " style="top:51.95px;font-size:9.0px;line-height:10.80px;color:#000;transform:scaleX(0.8615);transform-origin:0 50%;left:405.20px;">BASICO</div>
<div class="t " style="top:51.95px;font-size:9.0px;line-height:10.80px;color:#000;transform:scaleX(0.9009);transform-origin:0 50%;left:650.90px;">SILVA RODRIG...</div>
<div class="t " style="top:51.95px;font-size:9.0px;line-height:10.80px;color:#000;transform:scaleX(0.8869);transform-origin:0 50%;left:764.50px;">AMANDA ...</div>
<div class="t " style="top:51.95px;font-size:9.0px;line-height:10.80px;color:#000;transform:scaleX(0.9333);transform-origin:0 50%;left:839.50px;">1</div>
<div class="t " style="top:51.95px;font-size:9.0px;line-height:10.80px;color:#000;transform:scaleX(0.9030);transform-origin:0 50%;left:874.40px;">R$ 220,00</div>
<div class="t " style="top:51.95px;font-size:9.0px;line-height:10.80px;color:#000;transform:scaleX(0.9033);transform-origin:0 50%;left:949.40px;">EDNA.TRINDADE</div>
<div class="t " style="top:68.45px;font-size:9.0px;line-height:10.80px;color:#000;transform:scaleX(1.0001);transform-origin:0 50%;left:2.20px;">11</div>
<div class="t " style="top:68.45px;font-size:9.0px;line-height:10.80px;color:#000;transform:scaleX(0.9401);transform-origin:0 50%;left:62.30px;">0000000000000000007</div>
<div class="t " style="top:68.45px;font-size:9.0px;line-height:10.80px;color:#000;transform:scaleX(0.9547);transform-origin:0 50%;left:195.50px;">30/12/2022</div>
<div class="t " style="top:68.45px;font-size:9.0px;line-height:10.80px;color:#000;transform:scaleX(0.8953);transform-origin:0 50%;left:269.90px;">PARTICULAR</div>
<div class="t " style="top:68.45px;font-size:9.0px;line-height:10.80px;color:#000;transform:scaleX(0.8615);transform-origin:0 50%;left:405.20px;">BASICO</div>
<div class="t " style="top:68.45px;font-size:9.0px;line-height:10.80px;color:#000;transform:scaleX(0.8778);transform-origin:0 50%;left:650.90px;">MARCUS BAL...</div>
<div class="t " style="top:68.45px;font-size:9.0px;line-height:10.80px;color:#000;transform:scaleX(0.8840);transform-origin:0 50%;left:764.50px;">KARL MA...</div>
<div class="t " style="top:68.45px;font-size:9.0px;line-height:10.80px;color:#000;transform:scaleX(0.9333);transform-origin:0 50%;left:839.50px;">1</div>
<div class="t " style="top:68.45px;font-size:9.0px;line-height:10.80px;color:#000;transform:scaleX(0.9030);transform-origin:0 50%;left:874.40px;">R$ 270,00</div>
<div class="t " style="top:68.45px;font-size:9.0px;line-height:10.80px;color:#000;transform:scaleX(0.8509);transform-origin:0 50%;left:949.40px;">KARL.MATSUMOTO</div>
</div>
<div class="r" style="left:1008px;top:433.9px;width:12.4px;height:85px;background:#f0f0f0;"></div>
<div class="r" style="left:3px;top:507px;width:1005px;height:11.9px;background:#f0f0f0;"></div>
<div class="r" style="left:1014.4px;top:447.6px;width:1.2px;height:11.8px;background:#8c8c8c;"></div>
<div class="r" style="left:16px;top:513.2px;width:872.3px;height:1.2px;background:#8c8c8c;"></div>
<div class="r" style="left:0px;top:523.3px;width:1024px;height:15.7px;background:#b8ccdf;"></div>
<div class="t " style="top:525.78px;font-size:9.2px;line-height:11.04px;color:#1c2838;letter-spacing:-0.426px;left:3.70px;">Usuário: CLINICAS</div>
<div class="t " style="top:525.78px;font-size:9.2px;line-height:11.04px;color:#1c2838;letter-spacing:-0.069px;left:168.00px;">Data/Hora Abertura:</div>
<div class="t " style="top:525.78px;font-size:9.2px;line-height:11.04px;color:#1c2838;letter-spacing:-0.188px;left:355.00px;">Cod. Caixa:</div>
</body></html>
